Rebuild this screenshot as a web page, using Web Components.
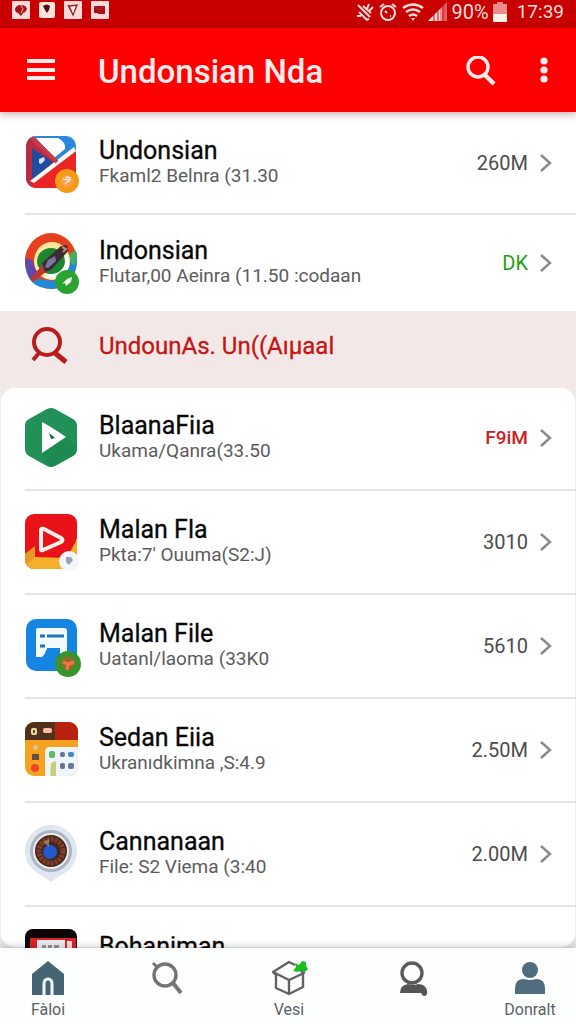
<!DOCTYPE html>
<html lang="id">
<head>
<meta charset="utf-8">
<meta name="viewport" content="width=device-width, initial-scale=1">
<title>Undonsian Nda</title>
<style>
  body {
    margin: 0;
    font-family: Roboto, "Liberation Sans", sans-serif;
    background: #fff;
  }
</style>
</head>
<body>
<file-app></file-app>

<script>
// Barra de estado del sistema
class StatusBar extends HTMLElement {
  constructor() {
    super();
    this.attachShadow({ mode: 'open' });
  }

  connectedCallback() {
    this.shadowRoot.innerHTML = `
      <style>
        :host {
          display: flex;
          justify-content: space-between;
          height: 28px;
          padding: 0 12px;
          background: #c80000;
          color: #ffdcdc;
          font-size: 20px;
          line-height: 24px;
        }
        div { display: flex; align-items: center; height: 24px; }
        .apps { gap: 8px; height: 20px; }
        .system { gap: 4px; }
        .time { margin-left: 6px; font-size: 19px; }
        svg { display: block; }
      </style>
      <div class="apps">
        <svg width="18" height="18" viewBox="0 0 18 18"><rect width="18" height="18" rx="1" fill="#ffdada"/><path d="M3 8q1-4 6-4 5 0 6 4-1 3-4 4l-2 3-3-3q-3-1-3-4z" fill="#a51218"/><path d="m9 4 2 4-2 4" stroke="#f8b0b0" fill="none"/></svg>
        <svg width="18" height="18" viewBox="0 0 18 18"><rect x="1" y="1" width="16" height="16" rx="2" fill="#ffe2dc"/><path d="M5 5q4-3 7 0l-1 4-2 3-2-3z" fill="#4a0a0a"/></svg>
        <svg width="18" height="18" viewBox="0 0 18 18"><rect width="18" height="18" rx="1" fill="#ffdada"/><path d="m4 4 5 10 4-10M5 5l8-1-4 10z" fill="none" stroke="#a01c20" stroke-width="1.3"/><path d="m8 6 3 0-2 6z" fill="#fff"/></svg>
        <svg width="20" height="18" viewBox="0 0 20 18"><rect x="1" width="18" height="18" rx="1" fill="#ffdada"/><path d="M4 5h11v8H9l-2-1H4z" fill="#a5121c"/><path d="m4 5 5 4 4-3" fill="none" stroke="#c03038"/></svg>
      </div>
      <div class="system">
        <svg width="18" height="20" viewBox="0 0 18 20" fill="none" stroke="#ffdcdc" stroke-width="2"><path d="m2 3 4 4M5 6l9 9M3 10l8 8M7 4l8 7M13 2l-2 5M17 5l-4 4M1 14l4 0M10 18l3-1"/></svg>
        <svg width="20" height="20" viewBox="0 0 20 20" fill="none" stroke="#ffdcdc" stroke-width="2"><circle cx="10" cy="11" r="7"/><path d="M2 5l4-3M14 2l4 3M7 9l2 2M12 14h1"/></svg>
        <svg width="22" height="20" viewBox="0 0 22 20" fill="none" stroke="#ffdcdc" stroke-width="2.6"><path d="M1 6q10-7 20 0M4 10q7-5 14 0M7 14q4-3 8 0"/><path d="m9 16 2 3 2-3z" fill="#ffdcdc" stroke="none"/></svg>
        <svg width="20" height="20" viewBox="0 0 20 20"><path d="M0 19 12 7v12z" fill="#ffdcdc"/><path d="M12 7l3-3v15h-3z" fill="#ef9090"/><path d="m15 4 4-4v19h-4z" fill="#dc6262"/><path d="M6 13v6M10 9v10M15 4v15" stroke="#c80000"/></svg>
        <span>90%</span>
        <svg width="14" height="20" viewBox="0 0 14 20"><path d="M4 0h6v2h4v11H0V2h4z" fill="#ed8c88"/><path d="M0 12h14v8H0z" fill="#fff0e8"/></svg>
        <span class="time">17:39</span>
      </div>
    `;
  }
}
customElements.define('status-bar', StatusBar);

// Cabecera roja con menú, título y acciones
class AppHeader extends HTMLElement {
  constructor() {
    super();
    this.attachShadow({ mode: 'open' });
  }

  connectedCallback() {
    this.shadowRoot.innerHTML = `
      <style>
        :host {
          display: flex;
          align-items: center;
          box-sizing: border-box;
          height: 84px;
          padding: 4px 12px 0 20px;
          background: #ff0000;
          color: #ffecec;
          position: relative;
          box-shadow: 0 2px 8px rgba(80, 0, 0, 0.35);
        }
        h1 {
          flex: 1;
          margin: 0 0 0 38px;
          font-size: 33px;
          line-height: 40px;
          font-weight: 500;
        }
        button {
          display: flex;
          justify-content: center;
          padding: 0;
          border: none;
          background: none;
          color: inherit;
          cursor: pointer;
        }
        .more { width: 40px; margin-left: 28px; }
      </style>
      <button aria-label="Menu">
        <svg width="40" height="32" viewBox="0 0 40 32" stroke="currentColor" stroke-width="4"><path d="M7 5h28M7 14h28M7 22h28"/></svg>
      </button>
      <h1><slot></slot></h1>
      <button aria-label="Cari">
        <svg width="32" height="32" viewBox="0 0 32 32" fill="none" stroke="currentColor"><circle cx="14" cy="11" r="10" stroke-width="3.4"/><path d="m21 19 9 9" stroke-width="4.4"/></svg>
      </button>
      <button class="more" aria-label="Lainnya">
        <svg width="8" height="32" viewBox="0 0 8 32" fill="currentColor"><circle cx="4" cy="5" r="3.6"/><circle cx="4" cy="14" r="3.6"/><circle cx="4" cy="23" r="3.6"/></svg>
      </button>
    `;
  }
}
customElements.define('app-header', AppHeader);

// Fila de la lista: icono, título, detalle y tamaño
class FileRow extends HTMLElement {
  constructor() {
    super();
    this.attachShadow({ mode: 'open' });
  }

  connectedCallback() {
    this.shadowRoot.innerHTML = `
      <style>
        :host {
          display: block;
          flex: none;
          padding-left: 25px;
          --size-color: #4c4c4c;
        }
        :host([tone="ok"]) { --size-color: #1fa012; }
        :host([tone="alert"]) { --size-color: #cc1e1e; }
        a {
          display: flex;
          align-items: center;
          box-sizing: border-box;
          height: var(--row-height, 104px);
          padding-right: 24px;
          border-bottom: 2px solid #e2e3e5;
          color: inherit;
          text-decoration: none;
        }
        :host([last]) a { border-bottom: none; }
        .text { flex: 1; min-width: 0; margin-left: 18px; }
        .title {
          font-size: 25px;
          line-height: 26px;
          color: #080808;
          -webkit-text-stroke: 0.3px #080808;
        }
        .detail {
          min-height: 24px;
          font-size: 19px;
          line-height: 24px;
          color: #5c5c5c;
          white-space: nowrap;
        }
        .size {
          font-size: 20px;
          line-height: 24px;
          color: var(--size-color);
        }
        .chevron { margin-left: 12px; }
        :host([tone="alert"]) .size { font-size: 19px; font-weight: 500; }
        ::slotted(svg) { display: block; flex: none; overflow: visible; }
      </style>
      <a href="#">
        <slot name="icon"></slot>
        <div class="text">
          <div class="title"><slot name="title"></slot></div>
          <div class="detail"><slot name="detail"></slot></div>
        </div>
        <span class="size"><slot name="size"></slot></span>
        <svg class="chevron" width="12" height="20" viewBox="0 0 12 20" fill="none" stroke="#898989" stroke-width="2.4"><path d="m1 2 9 8-9 8"/></svg>
      </a>
    `;
  }
}
customElements.define('file-row', FileRow);

// Banda rosada de búsqueda
class SearchBand extends HTMLElement {
  constructor() {
    super();
    this.attachShadow({ mode: 'open' });
  }

  connectedCallback() {
    this.shadowRoot.innerHTML = `
      <style>
        :host { display: block; background: #f1e8e7; }
        button {
          display: flex;
          align-items: center;
          width: 100%;
          height: 76px;
          padding: 0 0 6px 29px;
          border: none;
          background: none;
          color: #c41414;
          font: inherit;
          font-size: 24px;
          line-height: 28px;
          text-align: left;
          cursor: pointer;
          -webkit-text-stroke: 0.3px #c41414;
        }
        svg { margin-right: 30px; }
      </style>
      <button>
        <svg width="40" height="40" viewBox="0 0 40 40" fill="none" stroke="#b81c1c"><circle cx="18" cy="16" r="13" stroke-width="4"/><path d="m10 27-6 7" stroke-width="4"/><path d="m26 27 11 9" stroke-width="5"/></svg>
        <span><slot></slot></span>
      </button>
    `;
  }
}
customElements.define('search-band', SearchBand);

// Elemento de la navegación inferior
class NavItem extends HTMLElement {
  constructor() {
    super();
    this.attachShadow({ mode: 'open' });
  }

  connectedCallback() {
    this.shadowRoot.innerHTML = `
      <style>
        :host { display: block; width: 56px; }
        button {
          display: flex;
          flex-direction: column;
          align-items: center;
          gap: 2px;
          width: 100%;
          height: 76px;
          padding: 10px 0 0;
          border: none;
          background: none;
          color: #5b6064;
          font: inherit;
          font-size: 16px;
          line-height: 20px;
          cursor: pointer;
        }
        ::slotted(svg) { display: block; flex: none; }
      </style>
      <button aria-label="${this.getAttribute('label')}">
        <slot name="icon"></slot>
        <span><slot></slot></span>
      </button>
    `;
  }
}
customElements.define('nav-item', NavItem);

class FileApp extends HTMLElement {
  constructor() {
    super();
    this.attachShadow({ mode: 'open' });
  }

  connectedCallback() {
    this.shadowRoot.innerHTML = `
      <style>
        :host {
          display: flex;
          flex-direction: column;
          height: 100vh;
        }
        status-bar, app-header, .recent, search-band, nav { flex: none; }
        .recent { background: #fff; }
        .recent file-row:first-child { --row-height: 103px; }
        .recent file-row:last-child { --row-height: 96px; }
        .card-wrap {
          display: flex;
          flex: 1;
          min-height: 0;
          background: linear-gradient(#f1e8e7 50%, #e6e6e6 50%);
        }
        .card {
          display: flex;
          flex-direction: column;
          flex: 1;
          overflow: hidden;
          border-radius: 16px;
          background: #fff;
          box-shadow: inset 0 0 0 1px #eeeeee;
        }
        nav {
          display: flex;
          justify-content: space-between;
          padding: 0 18px 0 20px;
          background: #fdfefe;
          box-shadow: 0 -1px 8px rgba(0, 0, 0, 0.22);
          position: relative;
        }
      </style>
      <status-bar></status-bar>
      <app-header>Undonsian Nda</app-header>
      <div class="recent">
        <file-row>
          <svg slot="icon" width="56" height="60" viewBox="0 0 56 60">
            <defs><clipPath id="flag"><rect x="1" y="3" width="50" height="52" rx="10"/></clipPath></defs>
            <g clip-path="url(#flag)">
              <path d="M0 0h56v60H0z" fill="#2b86dc"/>
              <path d="m11 5 22 0q8 4 7 11l-11 9z" fill="#fff"/>
              <path d="M0 3h8l24 24-22 20v10H0z" fill="#b92b45"/>
              <path d="M7 15v34l21-20z" fill="#214b9d"/>
              <path d="M7 50 51 18v38H0z" fill="#ea2522"/>
              <path d="M5 48 49 14l2 4L9 50z" fill="#fff"/>
              <path d="m14 26 5-2 1 3-4 4-2-1z" fill="#cfe6ff"/>
              <path d="m5 3 27 26" stroke="#c83a4a" stroke-width="4"/>
            </g>
            <circle cx="42" cy="48" r="12" fill="#f79a17"/><circle cx="42" cy="48" r="6" fill="#ff9d4d"/><path d="m38 46 7 1-5 4M41 44l5 1" stroke="#fff3dc" stroke-width="1.5" fill="none"/>
          </svg>
          <span slot="title">Undonsian</span>
          <span slot="detail">Fkaml2 Belnra (31.30</span>
          <span slot="size">260M</span>
        </file-row>
        <file-row tone="ok" last>
          <svg slot="icon" width="56" height="60" viewBox="0 0 56 60">
            <ellipse cx="26" cy="28" rx="26" ry="28" fill="#e6401f"/>
            <path d="M0 28q0 28 28 28 24-2 24-32l-6-1-18 25-20-3-6-17z" fill="#2188da"/>
            <path d="M0 25q0 16 8 23l5-8-6-13z" fill="#6546ab"/>
            <path d="M52 20q0 8-3 13l-8-9 9-7z" fill="#43ae61"/>
            <ellipse cx="27" cy="28" rx="18" ry="19" fill="#ffe99a"/>
            <path d="M43 22q4 15-8 24l-16-1 22-23z" fill="#fff"/>
            <ellipse cx="26" cy="28" rx="14" ry="13" fill="#1c852f"/>
            <path d="M5 46 19 30l7 5-18 14z" fill="#b93a31"/>
            <path d="m17 30 19-17 6-1 1 6-16 18-7 3z" fill="#3e2b32"/>
            <path d="m23 27 7-4 1 5-8 7-3-1z" fill="#777aa7"/><path d="m37 14 4 2-3 3" stroke="#b58e78" stroke-width="2" fill="none"/>
            <circle cx="42" cy="49" r="12" fill="#2aa32f"/><path d="m37 51 5-5 5-2-1 5-5 4-1-3z" fill="#f0ffec"/>
          </svg>
          <span slot="title">Indonsian</span>
          <span slot="detail">Flutar,00 Aeinra (11.50 :codaan</span>
          <span slot="size">DK</span>
        </file-row>
      </div>
      <search-band>UndounAs. Un((Aıµaal</search-band>
      <div class="card-wrap">
        <div class="card">
          <file-row tone="alert">
            <svg slot="icon" width="56" height="60" viewBox="0 0 56 60">
              <path d="M22 1q4-2 8 0l18 10q4 2 4 7v23q0 5-4 7L30 58q-4 2-8 0L4 48q-4-2-4-7V18q0-5 4-7z" fill="#219157"/>
              <path d="M17 45 41 29l11 10v2q0 5-4 7L30 58q-3 1-5 1z" fill="#167d48" opacity=".35"/>
              <path d="M17 14q8 4 24 15L17 45z" fill="#fff"/><path d="m24 25 6 5-4 1z" fill="#12623a"/>
            </svg>
            <span slot="title">BlaanaFiıa</span>
            <span slot="detail">Ukama/Qanra(33.50</span>
            <span slot="size">F9iM</span>
          </file-row>
          <file-row>
            <svg slot="icon" width="56" height="60" viewBox="0 0 56 60">
              <defs><clipPath id="video"><rect y="2" width="52" height="55" rx="9"/></clipPath></defs>
              <g clip-path="url(#video)"><path d="M0 0h56v60H0z" fill="#e81218"/><path d="M0 42 10 35v10l32 1 10-20v34H0z" fill="#f4b02b"/><path d="m0 42 10-8v11L0 54z" fill="#e99725"/><path d="M10 34q1 10 9 11h23l9-16V5z" fill="#e81218"/></g>
              <path d="M16 18v19q0 2 2 1l18-8q3-2 0-4L19 17q-3-1-3 1z" fill="none" stroke="#fff0ec" stroke-width="4"/>
              <circle cx="44" cy="49" r="10" fill="#f4f5f9"/><path d="m41 45 5 0 2 3-4 5-3-3z" fill="#98a3b5"/>
            </svg>
            <span slot="title">Malan Fla</span>
            <span slot="detail">Pkta:7' Ouuma(S2:J)</span>
            <span slot="size">3010</span>
          </file-row>
          <file-row>
            <svg slot="icon" width="56" height="60" viewBox="0 0 56 60">
              <rect x="1" y="3" width="51" height="52" rx="10" fill="#1684e3"/>
              <path d="M13 12h26q3 0 3 3v23h-7V32H21q0 6-4 9h-6V15q0-3 2-3z" fill="#f3faff"/>
              <path d="M15 20h24M15 30h7" stroke="#2371b8" stroke-width="3"/><path d="M22 32h13v8H22z" fill="#1684e3"/><path d="M21 17v17M21 24h18" stroke="#f3faff" stroke-width="2"/>
              <circle cx="43" cy="48" r="13" fill="#37942b"/><circle cx="43" cy="47" r="7" fill="#887228"/><path d="m38 46 5 2 6-2-6 3-1 5" stroke="#ff7045" stroke-width="3" fill="none"/>
            </svg>
            <span slot="title">Malan File</span>
            <span slot="detail">Uatanl/laoma (33K0</span>
            <span slot="size">5610</span>
          </file-row>
          <file-row>
            <svg slot="icon" width="56" height="60" viewBox="0 0 56 60">
              <defs><clipPath id="desk"><rect y="2" width="53" height="54" rx="9"/></clipPath></defs>
              <g clip-path="url(#desk)">
                <path d="M0 0h56v60H0z" fill="#f5a31f"/><path d="M0 0h36v20H0z" fill="#51301c"/><path d="M30 0h26v20H30z" fill="#b82311"/>
                <path d="M20 32q0-5 5-5h31v33H20z" fill="#eff5fb"/><path d="m26 43 5-2v19h-6z" fill="#c7cf79"/>
              </g>
              <rect x="6" y="8" width="6" height="7" rx="2" fill="#f1dba0"/><path d="M8 10h2v3H8z" fill="#574833"/><rect x="18" y="8" width="9" height="5" rx="2" fill="#ffc0a2"/>
              <rect x="8" y="25" width="5" height="5" rx="2" fill="#ddc18a"/><rect x="7" y="34" width="7" height="6" fill="#684d42"/><circle cx="10" cy="48" r="4" fill="#ef4427"/>
              <rect x="24" y="31" width="6" height="7" rx="2" fill="#65b863"/><rect x="35" y="32" width="5" height="5" rx="2" fill="#67728e"/><rect x="43" y="32" width="6" height="5" rx="2" fill="#388bd1"/><rect x="35" y="43" width="5" height="6" rx="2" fill="#68728f"/><rect x="43" y="43" width="6" height="6" rx="2" fill="#6d7892"/>
            </svg>
            <span slot="title">Sedan Eiia</span>
            <span slot="detail">Ukranıdkimna ,S:4.9</span>
            <span slot="size">2.50M</span>
          </file-row>
          <file-row>
            <svg slot="icon" width="56" height="60" viewBox="0 0 56 60">
              <path d="M26 1a26 26 0 0 1 10 50L26 58 16 51A26 26 0 0 1 26 1z" fill="#dfe5f1"/>
              <circle cx="26" cy="27" r="21" fill="#acb4c2"/><circle cx="26" cy="27" r="18" fill="#e9ebef"/>
              <circle cx="26" cy="27" r="16" fill="#45251c"/><circle cx="26" cy="27" r="12" fill="none" stroke="#7c3f28" stroke-width="5" stroke-dasharray="3 1"/>
              <circle cx="25" cy="28" r="7" fill="#2458cc"/><path d="m18 18 6-3v8z" fill="#b7a6a1" opacity=".6"/>
            </svg>
            <span slot="title">Cannanaan</span>
            <span slot="detail">File: S2 Viema (3:40</span>
            <span slot="size">2.00M</span>
          </file-row>
          <file-row last>
            <svg slot="icon" width="56" height="60" viewBox="0 0 56 60">
              <rect width="52" height="54" rx="8" fill="#0d0506"/><path d="M5 9h46v36H5z" fill="#d9252a"/><path d="M12 11h28v34H12z" fill="#f1eef2"/><path d="M42 12h5v32h-5z" fill="#fbdede"/><path d="M17 18h4m2 0h4m2 0h5" stroke="#99939e" stroke-width="4"/>
            </svg>
            <span slot="title">Bohaniman</span>
          </file-row>
        </div>
      </div>
      <nav>
        <nav-item label="Fàloi">
          <svg slot="icon" width="40" height="40" viewBox="0 0 40 40"><path d="M20 3 36 16v21H4V16z" fill="#456572"/><path d="M16 37V26q0-5 4-5t4 5v11" fill="none" stroke="#f2f8fa" stroke-width="3"/></svg>
          Fàloi
        </nav-item>
        <nav-item label="Cari">
          <svg slot="icon" width="40" height="40" viewBox="0 0 40 40" fill="none" stroke="#747474"><circle cx="16" cy="17" r="11" stroke-width="3.4"/><path d="m4 5 5 5" stroke-width="3"/><path d="m24 25 8 10" stroke-width="4"/></svg>
        </nav-item>
        <nav-item label="Vesi">
          <svg slot="icon" width="40" height="40" viewBox="0 0 40 40" fill="none" stroke="#626262" stroke-width="2.4" stroke-linejoin="round"><path d="M26 7 20 4 4 14l16 8 15-7-4-3M4 14l3 3v13l13 6 14-7V16M20 22v14"/><path d="m26 5 4 2 3-4 4 1 0 4 2 3-3 3-4-2-3 2-5-1 3-4z" fill="#18bf1a" stroke="none"/></svg>
          Vesi
        </nav-item>
        <nav-item label="Profil">
          <svg slot="icon" width="40" height="40" viewBox="0 0 40 40"><circle cx="22" cy="15" r="10" fill="none" stroke="#5a5a5a" stroke-width="3.4"/><path d="M10 35q0-8 8-9 5 2 10 0 7 0 9 6 1 6-3 6-2 0-3-3z" fill="#555"/></svg>
        </nav-item>
        <nav-item label="Donralt">
          <svg slot="icon" width="40" height="40" viewBox="0 0 40 40" fill="#4f6d7e"><circle cx="20" cy="12" r="8"/><path d="M5 36v-6q0-9 9-9 6 2 12 0 9 0 9 9v6z"/></svg>
          Donralt
        </nav-item>
      </nav>
    `;
  }
}
customElements.define('file-app', FileApp);
</script>
</body>
</html>
